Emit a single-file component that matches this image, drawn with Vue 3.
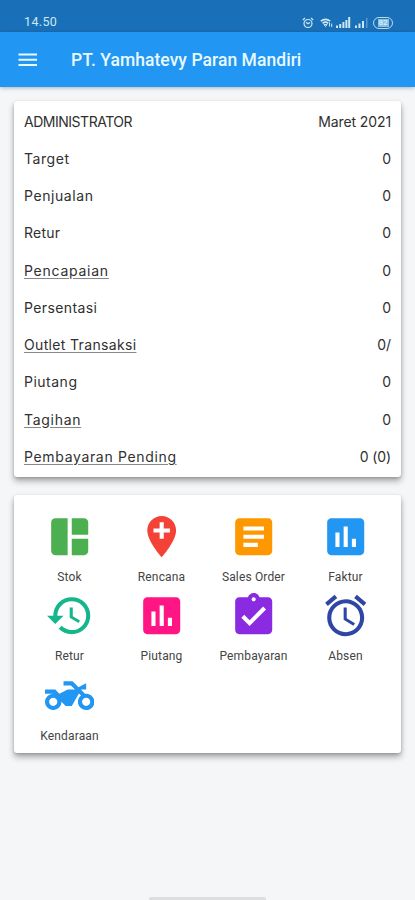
<script setup>
const rows = [
  { label: 'ADMINISTRATOR', value: 'Maret 2021', tracking: -0.48 },
  { label: 'Target', value: '0', tracking: 0.55 },
  { label: 'Penjualan', value: '0', tracking: 0.57 },
  { label: 'Retur', value: '0', tracking: 0.25 },
  { label: 'Pencapaian', value: '0', link: true, tracking: 0.75 },
  { label: 'Persentasi', value: '0', tracking: 0.38 },
  { label: 'Outlet Transaksi', value: '0/', link: true, tracking: 0.34 },
  { label: 'Piutang', value: '0', tracking: 0.5 },
  { label: 'Tagihan', value: '0', link: true, tracking: 0.7 },
  { label: 'Pembayaran Pending', value: '0 (0)', link: true, tracking: 0.66 },
]

const chart = 'M19 3H5c-1.1 0-2 .9-2 2v14c0 1.1.9 2 2 2h14c1.1 0 2-.9 2-2V5c0-1.1-.9-2-2-2zM9 17H7v-7h2v7zm4 0h-2V7h2v10zm4 0h-2v-4h2v4z'

const menu = [
  { label: 'Stok', tone: 'green', d: 'M11 21H5c-1.1 0-2-.9-2-2V5c0-1.1.9-2 2-2h6v18zM13 3h6c1.1 0 2 .9 2 2v6h-8V3zM13 13h8v6c0 1.1-.9 2-2 2h-6v-8z' },
  { label: 'Rencana', tone: 'red', d: 'M12 2C8.14 2 5 5.14 5 9c0 5.25 7 13 7 13s7-7.75 7-13c0-3.86-3.14-7-7-7zm4 8h-3v3h-2v-3H8V8h3V5h2v3h3v2z' },
  { label: 'Sales Order', tone: 'orange', d: 'M19 3H5c-1.1 0-2 .9-2 2v14c0 1.1.9 2 2 2h14c1.1 0 2-.9 2-2V5c0-1.1-.9-2-2-2zm-5 14H7v-2h7v2zm3-4H7v-2h10v2zm0-4H7V7h10v2z' },
  { label: 'Faktur', tone: 'blue', d: chart },
  { label: 'Retur', tone: 'teal', d: 'M13.5 8H12v5l4.28 2.54.72-1.21-3.5-2.08V8M13 3a9 9 0 0 0-9 9H1l3.96 4.03L9 12H6a7 7 0 0 1 7-7 7 7 0 0 1 7 7 7 7 0 0 1-7 7c-1.93 0-3.68-.79-4.94-2.06l-1.42 1.42C8.27 20 10.5 21 13 21a9 9 0 0 0 9-9 9 9 0 0 0-9-9' },
  { label: 'Piutang', tone: 'pink', d: chart },
  { label: 'Pembayaran', tone: 'purple', d: 'M19 3h-4.18C14.4 1.84 13.3 1 12 1c-1.3 0-2.4.84-2.82 2H5c-1.1 0-2 .9-2 2v14c0 1.1.9 2 2 2h14c1.1 0 2-.9 2-2V5c0-1.1-.9-2-2-2zm-7 0c.55 0 1 .45 1 1s-.45 1-1 1-1-.45-1-1 .45-1 1-1zm-2 14l-4-4 1.41-1.41L10 14.17l6.59-6.59L18 9l-8 8z' },
  { label: 'Absen', tone: 'indigo', d: 'M22 5.72l-4.6-3.86-1.29 1.53 4.6 3.86L22 5.72zM7.88 3.39L6.6 1.86 2 5.71l1.29 1.53 4.59-3.85zM12.5 8H11v6l4.75 2.85.75-1.23-4-2.37V8zM12 4c-4.97 0-9 4.03-9 9s4.02 9 9 9a9 9 0 0 0 0-18zm0 16c-3.87 0-7-3.13-7-7s3.13-7 7-7 7 3.13 7 7-3.13 7-7 7z' },
  { label: 'Kendaraan', tone: 'blue', d: 'M20 11c-.18 0-.36.03-.53.05L17.41 9H20V6l-3.72 1.86L13.41 5H9v2h3.59l2 2H11l-4 2-2-2H0v2h4c-2.21 0-4 1.79-4 4s1.79 4 4 4 4-1.79 4-4l2 2h3l3.49-6.1 1.01 1.01A4 4 0 0 0 16 15c0 2.21 1.79 4 4 4s4-1.79 4-4-1.79-4-4-4zM4 17c-1.1 0-2-.9-2-2s.9-2 2-2 2 .9 2 2-.9 2-2 2zm16 0c-1.1 0-2-.9-2-2s.9-2 2-2 2 .9 2 2-.9 2-2 2z' },
]
</script>

<template>
  <div class="screen">
    <div class="status">
      <span class="time">14.50</span>
      <div class="indicators">
        <svg class="alarm" viewBox="0 0 12 12" fill="none" stroke="currentColor" stroke-width="1.2">
          <circle cx="6" cy="6.5" r="4" />
          <path d="M.8 3 3 1M11.2 3 9 1M4 5.2l2 1.6 2-1.4" />
        </svg>
        <svg class="wifi" viewBox="0 0 13 10" fill="none" stroke="currentColor">
          <path d="M.8 3.2Q5.5-.6 10.2 3.2M2.6 5.3Q5.5 3 8.2 5.3" stroke-width="1.6" />
          <path d="M4 6.5h3L5.5 8.6zM9.5 4.5v4M11.7 5.5v3.5" />
        </svg>
        <svg class="signal" viewBox="0 0 15 11" fill="currentColor">
          <path d="M0 8.5h2V11H0zM3.2 7h2v4h-2zM6.4 5h2v6h-2zM9.4 3h2v8h-2zM12.2 0h2v11h-2z" />
        </svg>
        <svg class="signal weak" viewBox="0 0 13 11" fill="currentColor">
          <path d="M0 8.5h2V11H0zM3.5 6.5h2V11h-2zM7 4h2v7H7z" />
          <path d="M11 1h1.5v10H11z" opacity=".35" />
        </svg>
        <span class="battery"><span class="level">82</span></span>
      </div>
    </div>
    <header class="bar">
      <svg class="burger" viewBox="0 0 20 14" fill="currentColor">
        <path d="M.5.5h18.5v2H.5zM.5 5.8h18.5v2H.5zM.5 11.1h18.5v2H.5z" />
      </svg>
      <h1 class="title">PT. Yamhatevy Paran Mandiri</h1>
    </header>
    <main class="content">
      <section class="card summary">
        <div v-for="row in rows" :key="row.label" class="row">
          <span class="name" :class="{ link: row.link }" :style="{ letterSpacing: row.tracking + 'px' }">{{ row.label }}</span>
          <span class="value">{{ row.value }}</span>
        </div>
      </section>
      <section class="card menu">
        <div v-for="item in menu" :key="item.label" class="item">
          <svg class="icon" :class="item.tone" viewBox="0 0 24 24" fill="currentColor">
            <path :d="item.d" />
          </svg>
          <span class="caption">{{ item.label }}</span>
        </div>
      </section>
    </main>
    <div class="home"></div>
  </div>
</template>

<style>
body {
  margin: 0;
  background: #f4f6f8;
}
</style>

<style scoped>
.screen {
  display: flex;
  flex-direction: column;
  width: 415px;
  height: 900px;
  overflow: hidden;
  background: #f4f6f8;
  font-family: Roboto, "Noto Sans", sans-serif;
}
.status {
  display: flex;
  flex: none;
  align-items: flex-end;
  justify-content: space-between;
  box-sizing: border-box;
  height: 32px;
  padding: 0 22px 3px 24px;
  background: #1a70b8;
  color: #cbe9f3;
}
.time {
  font-size: 12.5px;
  line-height: 14px;
  letter-spacing: 0.35px;
}
.indicators {
  display: flex;
  align-items: center;
  height: 13px;
}
.alarm {
  width: 12px;
  height: 12px;
  margin-right: 6px;
}
.wifi {
  width: 13px;
  height: 10px;
  margin-right: 3px;
}
.signal {
  width: 15px;
  height: 11px;
  margin-right: 4px;
}
.weak {
  width: 13px;
  margin-right: 5px;
}
.battery {
  display: flex;
  align-items: center;
  justify-content: center;
  box-sizing: border-box;
  width: 20px;
  height: 12px;
  border: 1.5px solid #b9dced;
  border-radius: 6px;
}
.level {
  padding: 0 1px;
  background: #8bbedd;
  color: #e7fbff;
  font-size: 8px;
  line-height: 8px;
}
.bar {
  z-index: 1;
  display: flex;
  flex: none;
  align-items: center;
  box-sizing: border-box;
  height: 55px;
  padding: 0 18px;
  background: #2196f3;
  color: #e9faff;
  box-shadow: 0 1px 4px rgba(0, 0, 0, 0.28);
}
.burger {
  width: 20px;
  height: 14px;
  margin-right: 33px;
}
.title {
  margin: 0;
  font-size: 17.5px;
  font-weight: 500;
  line-height: 24px;
  letter-spacing: 0.05px;
  white-space: nowrap;
}
.content {
  display: flex;
  flex: 1;
  flex-direction: column;
  gap: 18px;
  padding: 14px 14px 0;
}
.card {
  box-sizing: border-box;
  border-radius: 3px;
  background: #fff;
  box-shadow: 0 4px 6px rgba(0, 0, 0, 0.32), 0 1px 3px rgba(0, 0, 0, 0.16);
}
.summary {
  height: 376px;
  padding: 1.5px 10px 0;
}
.row {
  display: flex;
  align-items: center;
  justify-content: space-between;
  height: 37.25px;
  color: #303030;
  font-family: Inter, "Open Sans", sans-serif;
  font-size: 14px;
}
.value {
  letter-spacing: -0.1px;
}
.link {
  text-decoration: underline;
  text-decoration-color: #888;
  text-underline-offset: 2px;
}
.menu {
  display: grid;
  grid-template-columns: repeat(4, 92px);
  grid-auto-rows: 79.2px;
  justify-content: center;
  height: 258px;
  padding-top: 17.3px;
}
.item {
  display: flex;
  flex-direction: column;
  align-items: center;
}
.icon {
  flex: none;
  width: 49.4px;
  height: 49.4px;
}
.caption {
  margin-top: 7.6px;
  color: #444;
  font-size: 12px;
  line-height: 16px;
  letter-spacing: 0.15px;
  white-space: nowrap;
}
.green { color: #4caf50; }
.red { color: #f44336; }
.orange { color: #ff9800; }
.blue { color: #2196f3; }
.teal { color: #16b68c; }
.pink { color: #ff1583; }
.purple { color: #8a2be2; }
.indigo { color: #3046a4; }
.home {
  align-self: center;
  width: 117px;
  height: 3px;
  border-radius: 2px 2px 0 0;
  background: #dcdee0;
}
</style>
